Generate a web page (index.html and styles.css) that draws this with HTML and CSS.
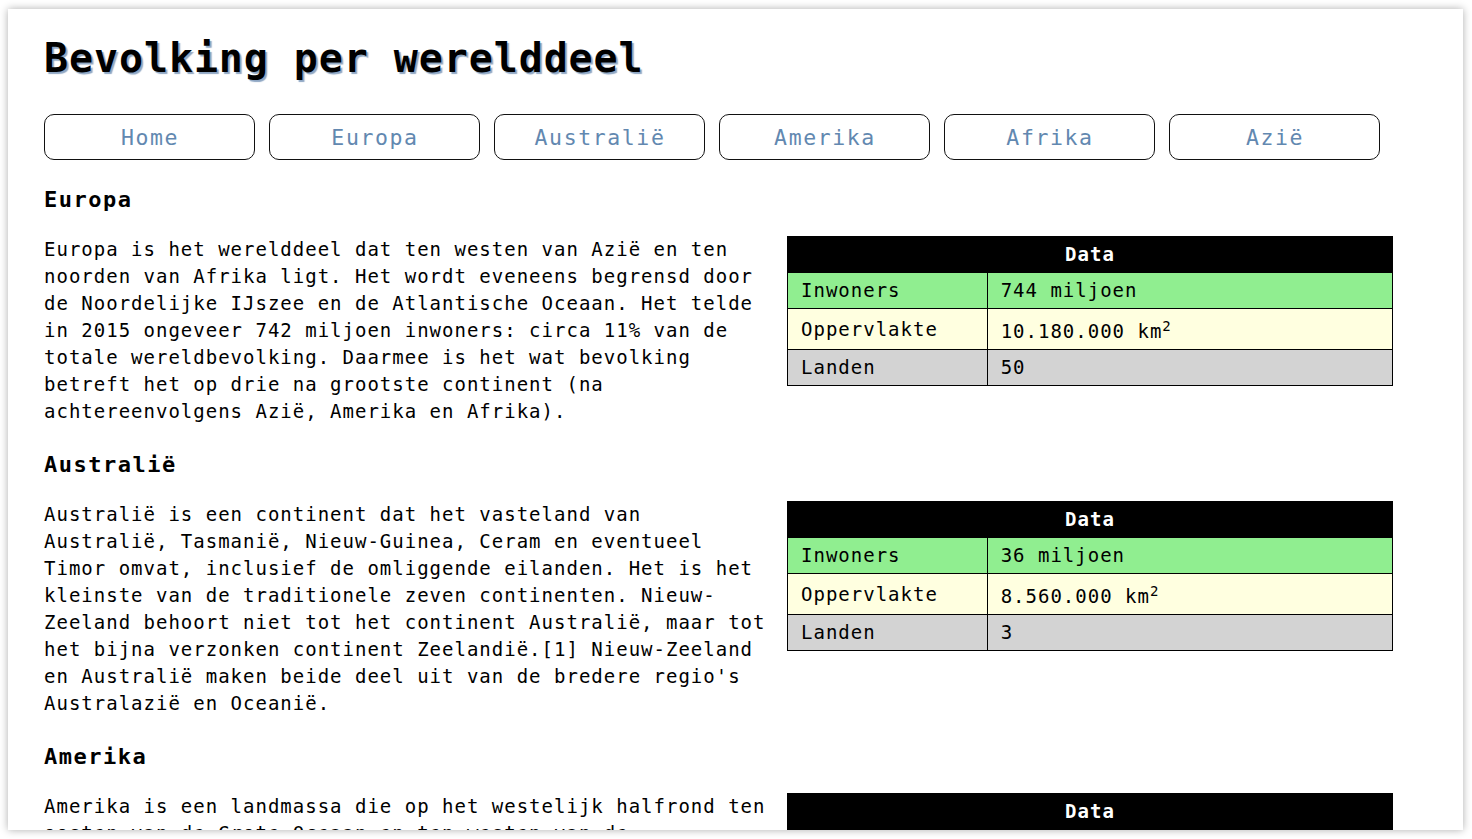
FILE: index.html
```html
<!DOCTYPE html>
<html lang="nl">
<head>
<meta charset="utf-8">
<title>Bevolking per werelddeel</title>
<link rel="stylesheet" href="styles.css">
</head>
<body>
<div class="frame">
  <h1 class="title">Bevolking per werelddeel</h1>
  <nav class="nav">
    <a class="nav-btn" href="#home">Home</a>
    <a class="nav-btn" href="#europa">Europa</a>
    <a class="nav-btn" href="#australie">Australië</a>
    <a class="nav-btn" href="#amerika">Amerika</a>
    <a class="nav-btn" href="#afrika">Afrika</a>
    <a class="nav-btn" href="#azie">Azië</a>
  </nav>

  <section class="continent" id="europa">
    <h2 class="continent-title">Europa</h2>
    <div class="continent-body">
      <p class="continent-text">Europa is het werelddeel dat ten westen van Azië en ten noorden van Afrika ligt. Het wordt eveneens begrensd door de Noordelijke IJszee en de Atlantische Oceaan. Het telde in 2015 ongeveer 742 miljoen inwoners: circa 11% van de totale wereldbevolking. Daarmee is het wat bevolking betreft het op drie na grootste continent (na achtereenvolgens Azië, Amerika en Afrika).</p>
      <table class="data">
        <tr><th colspan="2">Data</th></tr>
        <tr class="row-green"><td class="label">Inwoners</td><td>744 miljoen</td></tr>
        <tr class="row-yellow"><td class="label">Oppervlakte</td><td>10.180.000 km<sup>2</sup></td></tr>
        <tr class="row-gray"><td class="label">Landen</td><td>50</td></tr>
      </table>
    </div>
  </section>

  <section class="continent" id="australie">
    <h2 class="continent-title">Australië</h2>
    <div class="continent-body">
      <p class="continent-text">Australië is een continent dat het vasteland van Australië, Tasmanië, Nieuw-Guinea, Ceram en eventueel Timor omvat, inclusief de omliggende eilanden. Het is het kleinste van de traditionele zeven continenten. Nieuw-Zeeland behoort niet tot het continent Australië, maar tot het bijna verzonken continent Zeelandië.[1] Nieuw-Zeeland en Australië maken beide deel uit van de bredere regio's Australazië en Oceanië.</p>
      <table class="data">
        <tr><th colspan="2">Data</th></tr>
        <tr class="row-green"><td class="label">Inwoners</td><td>36 miljoen</td></tr>
        <tr class="row-yellow"><td class="label">Oppervlakte</td><td>8.560.000 km<sup>2</sup></td></tr>
        <tr class="row-gray"><td class="label">Landen</td><td>3</td></tr>
      </table>
    </div>
  </section>

  <section class="continent" id="amerika">
    <h2 class="continent-title">Amerika</h2>
    <div class="continent-body">
      <p class="continent-text">Amerika is een landmassa die op het westelijk halfrond ten oosten van de Grote Oceaan en ten westen van de Atlantische Oceaan ligt. Amerika wordt vaak opgedeeld in Noord-Amerika en Zuid-Amerika, die met elkaar verbonden zijn via Midden-Amerika.</p>
      <table class="data">
        <tr><th colspan="2">Data</th></tr>
        <tr class="row-green"><td class="label">Inwoners</td><td>1 miljard</td></tr>
        <tr class="row-yellow"><td class="label">Oppervlakte</td><td>42.549.000 km<sup>2</sup></td></tr>
        <tr class="row-gray"><td class="label">Landen</td><td>35</td></tr>
      </table>
    </div>
  </section>

  <section class="continent" id="afrika">
    <h2 class="continent-title">Afrika</h2>
    <div class="continent-body">
      <p class="continent-text">Afrika is qua oppervlakte en bevolking het op een na grootste werelddeel, na Azië. Het continent wordt omringd door de Middellandse Zee, de Rode Zee, de Indische Oceaan en de Atlantische Oceaan.</p>
      <table class="data">
        <tr><th colspan="2">Data</th></tr>
        <tr class="row-green"><td class="label">Inwoners</td><td>1,2 miljard</td></tr>
        <tr class="row-yellow"><td class="label">Oppervlakte</td><td>30.221.532 km<sup>2</sup></td></tr>
        <tr class="row-gray"><td class="label">Landen</td><td>54</td></tr>
      </table>
    </div>
  </section>

  <section class="continent" id="azie">
    <h2 class="continent-title">Azië</h2>
    <div class="continent-body">
      <p class="continent-text">Azië is het grootste en dichtstbevolkte werelddeel. Het beslaat ongeveer 30% van het landoppervlak van de aarde en er woont ongeveer 60% van de wereldbevolking.</p>
      <table class="data">
        <tr><th colspan="2">Data</th></tr>
        <tr class="row-green"><td class="label">Inwoners</td><td>4,4 miljard</td></tr>
        <tr class="row-yellow"><td class="label">Oppervlakte</td><td>44.579.000 km<sup>2</sup></td></tr>
        <tr class="row-gray"><td class="label">Landen</td><td>48</td></tr>
      </table>
    </div>
  </section>
</div>
</body>
</html>
```

FILE: styles.css
```css
html, body {
  margin: 0;
  padding: 0;
  background: #ffffff;
}

body {
  font-family: "DejaVu Sans Mono", "Liberation Mono", monospace;
  color: #000000;
}

.frame {
  box-sizing: border-box;
  margin: 9px 9px 9px 8px;
  height: 821px;
  overflow: hidden;
  padding: 25px 0 0 36px;
  background: #ffffff;
  box-shadow: 0 0 8px rgba(0, 0, 0, 0.32);
}

.title {
  margin: 0;
  font-size: 40px;
  line-height: 48px;
  font-weight: bold;
  letter-spacing: 0.9px;
  text-shadow: 2px 2px 1px #8fa7c4;
}

.nav {
  display: flex;
  gap: 14px;
  margin-top: 32px;
}

.nav-btn {
  box-sizing: border-box;
  display: flex;
  align-items: center;
  justify-content: center;
  width: 211px;
  height: 46px;
  border: 1px solid #111111;
  border-radius: 10px;
  font-size: 21.5px;
  letter-spacing: 1.6px;
  padding-left: 1px;
  padding-top: 1px;
  color: #6288b0;
  text-decoration: none;
}

.continent-title {
  margin: 26px 0 23px;
  font-size: 22px;
  line-height: 27px;
  font-weight: bold;
  letter-spacing: 1.5px;
}

.continent-body {
  display: flex;
  align-items: flex-start;
  gap: 13px;
}

.continent-text {
  flex: 0 0 730px;
  margin: 0;
  font-size: 19px;
  line-height: 27px;
  letter-spacing: 1px;
}

.data {
  width: 606px;
  border-collapse: collapse;
  border: 1px solid #000000;
  font-size: 19px;
  line-height: 27px;
  letter-spacing: 1px;
}

.data th {
  background: #000000;
  color: #ffffff;
  font-weight: bold;
  text-align: center;
  padding: 4px 13px;
  border: 1px solid #000000;
}

.data td {
  padding: 4px 13px;
  border: 1px solid #000000;
  text-align: left;
}

.data .label {
  width: 33%;
}

.data sup {
  font-size: 14px;
  letter-spacing: 0;
}

.row-green {
  background: #90ee90;
}

.row-yellow {
  background: #ffffe0;
}

.row-gray {
  background: #d3d3d3;
}
```
